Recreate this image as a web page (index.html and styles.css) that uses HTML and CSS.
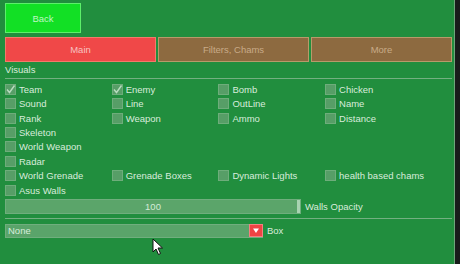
FILE: index.html
```html
<!DOCTYPE html>
<html lang="en">
<head>
<meta charset="UTF-8">
<meta name="viewport" content="width=device-width, initial-scale=1.0">
<title>Visuals</title>
<link rel="stylesheet" href="styles.css">
</head>
<body>

<div class="window">
    <div class="top">
        <button class="back">Back</button>
    </div>

    <div class="tabs">
        <div class="tab tab-main">Main</div>
        <div class="tab">Filters, Chams</div>
        <div class="tab tab-more">More</div>
    </div>

    <div class="section">Visuals</div>
    <hr class="sep">

    <div class="options">
        <label class="opt"><span class="box checked"><svg viewBox="0 0 11 11"><path d="M2 5.5 L4.5 8.5 L9.5 1.5" fill="none" stroke="#b8dcbf" stroke-width="1.4"/></svg></span>Team</label>
        <label class="opt"><span class="box checked"><svg viewBox="0 0 11 11"><path d="M2 5.5 L4.5 8.5 L9.5 1.5" fill="none" stroke="#b8dcbf" stroke-width="1.4"/></svg></span>Enemy</label>
        <label class="opt"><span class="box"></span>Bomb</label>
        <label class="opt"><span class="box"></span>Chicken</label>

        <label class="opt"><span class="box"></span>Sound</label>
        <label class="opt"><span class="box"></span>Line</label>
        <label class="opt"><span class="box"></span>OutLine</label>
        <label class="opt"><span class="box"></span>Name</label>

        <label class="opt"><span class="box"></span>Rank</label>
        <label class="opt"><span class="box"></span>Weapon</label>
        <label class="opt"><span class="box"></span>Ammo</label>
        <label class="opt"><span class="box"></span>Distance</label>

        <label class="opt full"><span class="box"></span>Skeleton</label>
        <label class="opt full"><span class="box"></span>World Weapon</label>
        <label class="opt full"><span class="box"></span>Radar</label>

        <label class="opt"><span class="box"></span>World Grenade</label>
        <label class="opt"><span class="box"></span>Grenade Boxes</label>
        <label class="opt"><span class="box"></span>Dynamic Lights</label>
        <label class="opt"><span class="box"></span>health based chams</label>

        <label class="opt full"><span class="box"></span>Asus Walls</label>
    </div>

    <div class="slider-row">
        <div class="slider">
            <span class="slider-value">100</span>
            <span class="grab"></span>
        </div>
        <span class="caption">Walls Opacity</span>
    </div>

    <hr class="sep">

    <div class="combo-row">
        <div class="combo">
            <span class="combo-value">None</span>
            <span class="arrow"><svg viewBox="0 0 14 13"><path d="M3.5 4 L10.5 4 L7 9.5 Z" fill="#ffffff"/></svg></span>
        </div>
        <span class="caption">Box</span>
    </div>

    <svg class="cursor" viewBox="0 0 12 18" width="12" height="18">
        <path d="M1 1 L1 14 L4 11 L6.5 16.5 L8.5 15.5 L6 10 L10.5 10 Z" fill="#ffffff" stroke="#111111" stroke-width="1"/>
    </svg>
</div>

</body>
</html>
```

FILE: styles.css
```css
body {
    margin: 0;
    background-color: #181c1b;
    font-family: 'Liberation Sans', Arial, sans-serif;
    font-size: 9.5px;
    color: #d8ecdc;
}

.window {
    position: relative;
    width: 447px;
    height: 261px;
    padding: 3px 2px 0 5px;
    background-color: #218e3e;
    border-right: 1px solid #6fa57b;
    border-bottom: 1px solid #6f8f76;
    display: flex;
    flex-direction: column;
}

.top {
    height: 30px;
}

.back {
    width: 76px;
    height: 30px;
    background-color: #12e025;
    border: 1px solid #5cf06a;
    color: #bff7c4;
    font-family: inherit;
    font-size: 9.5px;
    padding: 0;
}

.tabs {
    display: flex;
    gap: 2px;
    margin-top: 4px;
    height: 25px;
    width: 447px;
}

.tab {
    flex: 151px 0 0;
    box-sizing: border-box;
    display: flex;
    justify-content: center;
    align-items: center;
    background-color: #8d6a40;
    border: 1px solid #b89a6a;
    color: #c8ab88;
}

.tab-main {
    background-color: #f04848;
    border-color: #f47a6a;
    color: #f7c2c0;
}

.tab-more {
    flex: 1;
}

.section {
    margin-top: 1px;
    height: 14px;
    line-height: 14px;
}

.sep {
    width: 447px;
    margin: 1px 0 0;
    border: none;
    border-top: 1px solid #73b081;
    height: 0;
}

.options {
    margin-top: 3px;
    display: grid;
    grid-template-columns: repeat(4, 106.7px);
    grid-auto-rows: 14.45px;
}

.opt {
    display: flex;
    align-items: center;
    gap: 3px;
    white-space: nowrap;
}

.opt.full {
    grid-column: 1 / -1;
}

.box {
    width: 9px;
    height: 9px;
    border: 1px solid #6ead7b;
    background-color: #579e67;
    display: flex;
}

.box svg {
    width: 11px;
    height: 11px;
    margin: -1px;
}

.slider-row,
.combo-row {
    display: flex;
    align-items: center;
    gap: 4px;
}

.slider-row {
    margin-top: 1px;
    height: 15px;
}

.slider {
    position: relative;
    width: 294px;
    height: 13px;
    border: 1px solid #6fae7d;
    background-color: #5ba56a;
    display: flex;
    justify-content: center;
    align-items: center;
}

.slider-value {
    color: #d4ebd8;
}

.grab {
    position: absolute;
    right: 0;
    top: 0;
    width: 3px;
    height: 13px;
    background-color: #a9d3b1;
}

.slider-row + .sep {
    margin-top: 4px;
}

.combo-row {
    margin-top: 5px;
    height: 14px;
}

.combo {
    width: 256px;
    height: 12px;
    border: 1px solid #70ae7e;
    background-color: #5aa46a;
    display: flex;
    align-items: center;
}

.combo-value {
    flex: 1;
    padding-left: 2px;
}

.arrow {
    width: 14px;
    height: 13px;
    margin-right: -1px;
    background-color: #ef4444;
    border: 1px solid #f58080;
    box-sizing: border-box;
    display: flex;
}

.arrow svg {
    width: 12px;
    height: 11px;
}

.caption {
    color: #d8ecdc;
}

.cursor {
    position: absolute;
    left: 152px;
    top: 238px;
}
```
